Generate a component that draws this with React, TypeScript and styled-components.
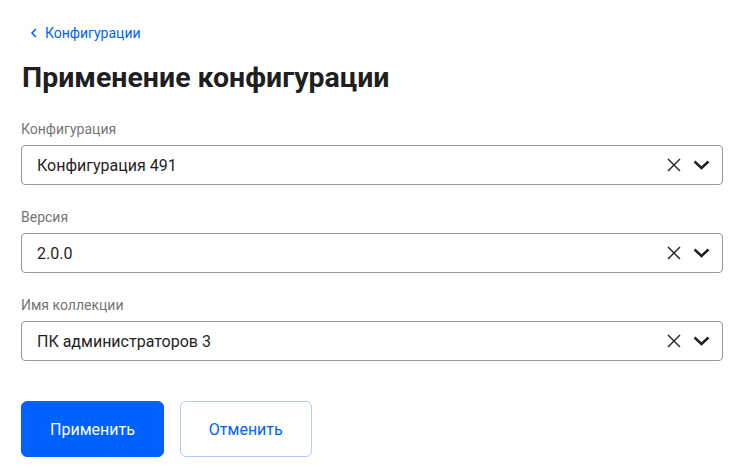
import React from 'react'
import { styled, createGlobalStyle } from 'styled-components'

const blue = '#0061ff'
const text = '#1f1f1f'
const muted = '#757575'
const border = '#9a9a9a'

const GlobalStyle = createGlobalStyle`
  body {
    margin: 0;
    background: #fff;
    font-family: Roboto, "Liberation Sans", Arial, sans-serif;
  }
`

const Page = styled.main`
  padding: 22px 11px 0 21px;
  display: flex;
  flex-direction: column;
`

const BackLink = styled.a`
  display: flex;
  align-items: center;
  gap: 7px;
  padding-left: 9px;
  height: 22px;
  color: ${blue};
  font-size: 14px;
  text-decoration: none;
  svg {
    width: 8px;
    height: 10px;
  }
`

const Title = styled.h1`
  margin: 14px 0 0 1px;
  font-size: 28.5px;
  line-height: 40px;
  font-weight: 700;
  color: ${text};
`

const Form = styled.form`
  margin-top: 20px;
  display: flex;
  flex-direction: column;
  gap: 21px;
`

const Field = styled.div`
  display: flex;
  flex-direction: column;
  gap: 7px;
`

const Label = styled.label`
  font-size: 14px;
  line-height: 20px;
  color: ${muted};
  padding-top: 1px;
  margin-bottom: -1px;
`

const Select = styled.div`
  height: 40px;
  box-sizing: border-box;
  border: 1px solid ${border};
  border-radius: 4px;
  display: flex;
  align-items: center;
  padding: 0 12px 0 15px;
`

const Value = styled.span`
  flex: 1;
  font-size: 16px;
  color: ${text};
`

const Icons = styled.span`
  display: flex;
  align-items: center;
  gap: 12px;
`

const Actions = styled.div`
  margin-top: 40px;
  display: flex;
  gap: 16px;
`

const Button = styled.button<{ $primary?: boolean }>`
  height: 56px;
  padding: 0 28px;
  border-radius: 6px;
  font-family: inherit;
  font-size: 16px;
  cursor: pointer;
  border: 1px solid ${(p) => (p.$primary ? blue : '#adc9ff')};
  background: ${(p) => (p.$primary ? blue : '#fff')};
  color: ${(p) => (p.$primary ? '#fff' : blue)};
`

const ClearIcon = () => (
  <svg width="14" height="14" viewBox="0 0 14 14" fill="none">
    <path d="M1 1L13 13M13 1L1 13" stroke="#1f1f1f" strokeWidth="1.4" />
  </svg>
)

const ChevronIcon = () => (
  <svg width="17" height="10" viewBox="0 0 17 10" fill="none">
    <path d="M1.5 1.5L8.5 8L15.5 1.5" stroke="#1f1f1f" strokeWidth="2.4" />
  </svg>
)

const fields = [
  { label: 'Конфигурация', value: 'Конфигурация 491' },
  { label: 'Версия', value: '2.0.0' },
  { label: 'Имя коллекции', value: 'ПК администраторов 3' },
]

const App = () => {
  return (
    <>
      <GlobalStyle />
      <Page>
        <BackLink href="#">
          <svg viewBox="0 0 8 10" fill="none">
            <path d="M6 1L2 5L6 9" stroke={blue} strokeWidth="1.6" />
          </svg>
          Конфигурации
        </BackLink>
        <Title>Применение конфигурации</Title>
        <Form>
          {fields.map((f) => (
            <Field key={f.label}>
              <Label>{f.label}</Label>
              <Select>
                <Value>{f.value}</Value>
                <Icons>
                  <ClearIcon />
                  <ChevronIcon />
                </Icons>
              </Select>
            </Field>
          ))}
        </Form>
        <Actions>
          <Button $primary type="button">
            Применить
          </Button>
          <Button type="button">Отменить</Button>
        </Actions>
      </Page>
    </>
  )
}

export default App
